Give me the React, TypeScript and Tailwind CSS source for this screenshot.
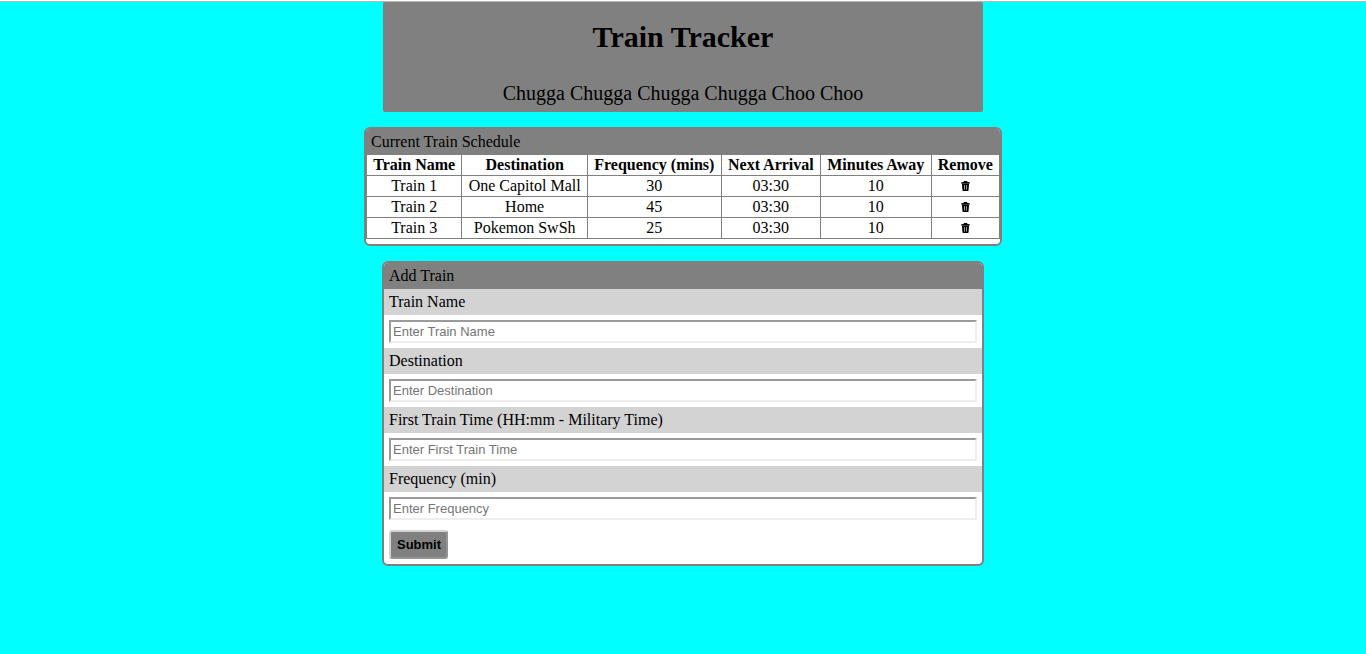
import React from "react";

type Train = {
  name: string;
  destination: string;
  frequency: number;
  nextArrival: string;
  minutesAway: number;
};

const trains: Train[] = [
  { name: "Train 1", destination: "One Capitol Mall", frequency: 30, nextArrival: "03:30", minutesAway: 10 },
  { name: "Train 2", destination: "Home", frequency: 45, nextArrival: "03:30", minutesAway: 10 },
  { name: "Train 3", destination: "Pokemon SwSh", frequency: 25, nextArrival: "03:30", minutesAway: 10 },
];

const columns = ["Train Name", "Destination", "Frequency (mins)", "Next Arrival", "Minutes Away", "Remove"];

const fields = [
  { id: "train-name", label: "Train Name", placeholder: "Enter Train Name" },
  { id: "destination", label: "Destination", placeholder: "Enter Destination" },
  { id: "first-time", label: "First Train Time (HH:mm - Military Time)", placeholder: "Enter First Train Time" },
  { id: "frequency", label: "Frequency (min)", placeholder: "Enter Frequency" },
];

const cell = "h-[21px] border border-[#808080] px-1.5 py-0 text-center leading-5";

function TrashIcon() {
  return (
    <svg viewBox="0 0 9 10" className="h-2.5 w-[9px]" aria-hidden="true">
      <path d="M3 0h3l.5.9L8.6 1.2 9 2.6H0L.4 1.2 2.5.9z" fill="#000" />
      <path d="M.9 2.6h7.2L7.5 9.4 7 10H2l-.5-.6z" fill="#000" />
      <path d="M3.5 4v4.6M5.5 4v4.6" stroke="#aaa" strokeWidth=".9" />
    </svg>
  );
}

export default function App() {
  return (
    <div className="flex min-h-screen flex-col items-center border-t border-white bg-[#00ffff] font-['Liberation_Serif',serif] text-base text-black">
      <div className="h-px w-full bg-[#b6b6b6]" />
      <header className="w-[600px] max-w-full rounded-[2px] bg-[#808080] pt-[19px] pb-[7px] text-center">
        <h1 className="text-3xl leading-8 font-bold">Train Tracker</h1>
        <p className="mt-7 text-xl leading-6">Chugga Chugga Chugga Chugga Choo Choo</p>
      </header>

      <main className="flex w-full flex-col items-center">
        <section className="mt-[15px] min-w-[638px] overflow-hidden rounded-md border-2 border-[#808080] bg-white pb-[5px]">
          <h2 className="bg-[#808080] px-[5px] py-1 leading-[18px]">Current Train Schedule</h2>
          <table className="w-full border-collapse">
            <thead>
              <tr>
                {columns.map((c) => (
                  <th key={c} className="h-5 border border-t-0 border-[#808080] px-1.5 py-0 text-center leading-[19px] font-bold">
                    {c}
                  </th>
                ))}
              </tr>
            </thead>
            <tbody>
              {trains.map((t) => (
                <tr key={t.name}>
                  <td className={cell}>{t.name}</td>
                  <td className={cell}>{t.destination}</td>
                  <td className={cell}>{t.frequency}</td>
                  <td className={cell}>{t.nextArrival}</td>
                  <td className={cell}>{t.minutesAway}</td>
                  <td className={cell}>
                    <button type="button" aria-label={`Remove ${t.name}`} className="mx-auto block">
                      <TrashIcon />
                    </button>
                  </td>
                </tr>
              ))}
            </tbody>
          </table>
        </section>

        <section className="mt-[15px] w-[602px] max-w-full overflow-hidden rounded-md border-2 border-[#808080] bg-white">
          <h2 className="bg-[#808080] px-[5px] py-1 leading-[18px]">Add Train</h2>
          <form onSubmit={(e) => e.preventDefault()}>
            {fields.map((f) => (
              <div key={f.id}>
                <label htmlFor={f.id} className="block bg-[#d3d3d3] px-[5px] py-1 leading-[18px]">
                  {f.label}
                </label>
                <div className="p-[5px]">
                  <input
                    id={f.id}
                    type="text"
                    placeholder={f.placeholder}
                    className="block h-[23px] w-full border-2 border-t-[#9a9a9a] border-r-[#eeeeee] border-b-[#eeeeee] border-l-[#9a9a9a] bg-white px-0.5 font-['Liberation_Sans',sans-serif] text-[13px] placeholder:text-[#757575]"
                  />
                </div>
              </div>
            ))}
            <div className="p-[5px]">
              <button
                type="submit"
                className="block rounded-[3px] border-2 border-[#d3d3d3] border-r-[#949494] border-b-[#949494] bg-[#808080] pt-[5px] pr-[5px] pb-1 pl-1.5 font-['Liberation_Sans',sans-serif] text-[13px] leading-4 font-bold"
              >
                Submit
              </button>
            </div>
          </form>
        </section>
      </main>
    </div>
  );
}
